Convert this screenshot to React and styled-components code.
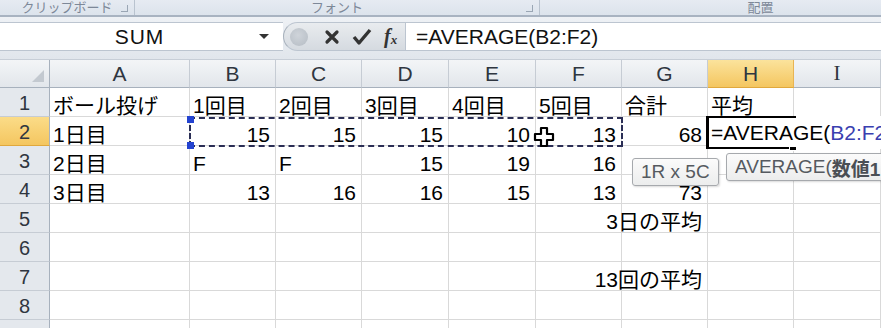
import React from 'react';
import styled, { createGlobalStyle } from 'styled-components';

const COLS = [
  { key: 'A', w: 140 },
  { key: 'B', w: 86 },
  { key: 'C', w: 86 },
  { key: 'D', w: 87 },
  { key: 'E', w: 87 },
  { key: 'F', w: 86 },
  { key: 'G', w: 86 },
  { key: 'H', w: 86 },
  { key: 'I', w: 87 },
];

// each row: [A..I] ; numbers are right aligned
const ROWS = [
  ['ボール投げ', '1回目', '2回目', '3回目', '4回目', '5回目', '合計', '平均', ''],
  ['1日目', 15, 15, 15, 10, 13, 68, '', ''],
  ['2日目', 'F', 'F', 15, 19, 16, '', '', ''],
  ['3日目', 13, 16, 16, 15, 13, 73, '', ''],
  ['', '', '', '', '', '', { text: '3日の平均', right: true }, '', ''],
  ['', '', '', '', '', '', '', '', ''],
  ['', '', '', '', '', '', { text: '13回の平均', right: true }, '', ''],
  ['', '', '', '', '', '', '', '', ''],
];

const GlobalStyle = createGlobalStyle`
  html, body {
    margin: 0;
    padding: 0;
    background: #ffffff;
    overflow: hidden;
  }
  * { box-sizing: border-box; }
`;

const Page = styled.div`
  width: 881px;
  height: 328px;
  overflow: hidden;
  display: flex;
  flex-direction: column;
  font-family: "Liberation Sans", "Noto Sans CJK JP", sans-serif;
  background: #ffffff;

  & > * { flex-shrink: 0; }
`;

const Ribbon = styled.div`
  height: 15px;
  display: grid;
  grid-template-columns: 135px 405px 1fr;
  background: linear-gradient(#e6ebf2, #dce3ec);
  overflow: hidden;
`;

const RibbonGroup = styled.div`
  position: relative;
  border-right: 1px solid #b9c3cf;
  color: #7d8898;
  font-size: 13px;
  line-height: 13px;
  padding-top: 1px;
  text-align: center;
  padding-left: ${(p) => p.$shift || 0}px;
  white-space: nowrap;
  overflow: hidden;

  &:last-child { border-right: none; }
`;

const Launcher = styled.span`
  position: absolute;
  right: 6px;
  top: 5px;
  width: 7px;
  height: 7px;
  border-right: 1px solid #9aa6b4;
  border-bottom: 1px solid #9aa6b4;
`;

const RibbonEdge = styled.div`
  height: 2px;
  background: #a8b3c1;
`;

const FormulaStrip = styled.div`
  height: 43px;
  padding: 5px 0 8px;
  display: flex;
  background: linear-gradient(#eef1f5, #e1e6ec);
  border-bottom: 1px solid #c7ced7;
`;

const NameBox = styled.div`
  width: 283px;
  display: flex;
  align-items: center;
  background: #ffffff;
  border-top: 1px solid #bcc5d0;
  border-bottom: 1px solid #bcc5d0;
  font-size: 21px;
  color: #111;
`;

const NameText = styled.span`
  flex: 1;
  text-align: center;
  padding-left: 20px;
  letter-spacing: 1px;
`;

const DropArrow = styled.span`
  width: 0;
  height: 0;
  margin-right: 14px;
  border-left: 5px solid transparent;
  border-right: 5px solid transparent;
  border-top: 5px solid #333;
`;

const FxPill = styled.div`
  width: 122px;
  display: flex;
  align-items: center;
  gap: 12px;
  padding-left: 6px;
  background: linear-gradient(#e9ecef, #d5dae0);
  border-top: 1px solid #bcc5d0;
  border-bottom: 1px solid #bcc5d0;
  border-left: 1px solid #a9b2bd;
  border-radius: 16px 0 0 16px;
`;

const Knob = styled.span`
  width: 18px;
  height: 18px;
  border-radius: 50%;
  background: radial-gradient(circle at 45% 40%, #cfd4da, #b5bcc4);
  margin-right: 4px;
`;

const FxLabel = styled.span`
  font-family: "Liberation Serif", serif;
  font-style: italic;
  font-weight: bold;
  font-size: 20px;
  color: #333;

  sub {
    font-size: 13px;
    vertical-align: -1px;
  }
`;

const FormulaInput = styled.div`
  flex: 1;
  display: flex;
  align-items: center;
  padding-left: 10px;
  background: #ffffff;
  border: 1px solid #bcc5d0;
  border-right: none;
  font-size: 21px;
  color: #111;
  white-space: nowrap;
`;

const Sheet = styled.div`
  position: relative;
  display: grid;
  grid-template-columns: 50px ${COLS.map((c) => c.w + 'px').join(' ')};
  grid-template-rows: 28px repeat(9, 29px);
  font-size: 21px;
`;

const Corner = styled.div`
  background: linear-gradient(#f3f5f7, #e2e6eb);
  border-right: 1px solid #a7b1bd;
  border-bottom: 1px solid #a7b1bd;
  position: relative;

  &::after {
    content: '';
    position: absolute;
    right: 5px;
    bottom: 5px;
    border-left: 12px solid transparent;
    border-bottom: 12px solid #c3c9d0;
  }
`;

const ColHead = styled.div`
  display: flex;
  align-items: center;
  justify-content: center;
  color: #2f3640;
  font-size: 21px;
  background: ${(p) =>
    p.$active ? 'linear-gradient(#fbe39c, #f4c660)' : 'linear-gradient(#f3f5f7, #e2e6eb)'};
  border-right: 1px solid ${(p) => (p.$active ? '#e8b453' : '#c6ccd4')};
  border-bottom: 1px solid ${(p) => (p.$active ? '#e0a83d' : '#a7b1bd')};
  font-family: ${(p) => (p.$serif ? '"Liberation Serif", serif' : 'inherit')};
`;

const RowHead = styled.div`
  display: flex;
  align-items: center;
  justify-content: center;
  color: #2f3640;
  font-size: 20px;
  padding-top: 2px;
  background: ${(p) => (p.$active ? 'linear-gradient(#fbdc88, #f4c660)' : '#e4e8ed')};
  border-right: 1px solid #a7b1bd;
  border-bottom: 1px solid ${(p) => (p.$active ? '#e0a83d' : '#c6ccd4')};
`;

const Cell = styled.div`
  padding: 7px ${(p) => (p.$right ? '5px' : '0')} 0 ${(p) => (p.$right ? '0' : '3px')};
  line-height: 22px;
  text-align: ${(p) => (p.$right ? 'right' : 'left')};
  border-right: 1px solid #d9d9d9;
  border-bottom: 1px solid #d9d9d9;
  white-space: nowrap;
  color: #000;
  overflow: visible;
  direction: ${(p) => (p.$spill ? 'rtl' : 'ltr')};
`;

const Marquee = styled.div`
  position: absolute;
  left: 189px;
  top: 57px;
  width: 434px;
  height: 30px;
  border: 2px dashed #2a2e55;
  background: transparent;
`;

const Handle = styled.span`
  position: absolute;
  left: -4px;
  width: 7px;
  height: 7px;
  background: #2443d0;
  top: ${(p) => (p.$bottom ? '23px' : '-3px')};
`;

const EditCell = styled.div`
  position: absolute;
  left: 706px;
  top: 56px;
  width: 175px;
  height: 33px;
  background: #ffffff;
  border-left: 3px solid #000;
  padding-left: 2px;
  padding-top: 2px;
  line-height: 30px;
  font-size: 21px;
  white-space: nowrap;
  overflow: hidden;

  &::before,
  &::after {
    content: '';
    position: absolute;
    left: 0;
    width: 87px;
    height: 2px;
    background: #000;
  }
  &::before { top: 0; }
  &::after { bottom: 0; }
`;

const RangeRef = styled.span`
  color: #3a3fb0;
`;

const FillHandle = styled.span`
  position: absolute;
  left: 789px;
  top: 86px;
  width: 8px;
  height: 5px;
  background: #000;
  border: 1px solid #fff;
`;

const Tip = styled.div`
  position: absolute;
  left: ${(p) => p.$x}px;
  top: ${(p) => p.$y}px;
  height: 28px;
  padding: 0 8px;
  display: flex;
  align-items: center;
  background: linear-gradient(#fbfbfb, #eceded);
  border: 1px solid #a6a9ad;
  border-radius: 3px;
  box-shadow: 1px 1px 2px rgba(0, 0, 0, 0.15);
  color: #555a60;
  font-size: 19px;
  white-space: nowrap;

  b { font-weight: bold; color: #4a4f55; }
`;

const Cursor = styled.svg`
  position: absolute;
  left: 533px;
  top: 66px;
`;

function MoveCursor() {
  return (
    <Cursor width="22" height="22" viewBox="0 0 22 22">
      <path
        d="M8 2h6v6h6v6h-6v6H8v-6H2V8h6z"
        fill="#fff"
        stroke="#000"
        strokeWidth="2.2"
        strokeLinejoin="round"
      />
    </Cursor>
  );
}

function CancelIcon() {
  return (
    <svg width="16" height="16" viewBox="0 0 16 16">
      <path d="M3 3l10 10M13 3L3 13" stroke="#333" strokeWidth="3.2" strokeLinecap="round" />
    </svg>
  );
}

function EnterIcon() {
  return (
    <svg width="20" height="18" viewBox="0 0 20 18">
      <path d="M2 9l5 6L18 2" fill="none" stroke="#333" strokeWidth="3.4" strokeLinejoin="round" />
    </svg>
  );
}

export default function App() {
  return (
    <Page>
      <GlobalStyle />
      <Ribbon>
        <RibbonGroup>
          クリップボード
          <Launcher />
        </RibbonGroup>
        <RibbonGroup>
          フォント
          <Launcher />
        </RibbonGroup>
        <RibbonGroup $shift={100}>配置</RibbonGroup>
      </Ribbon>
      <RibbonEdge />
      <FormulaStrip>
        <NameBox>
          <NameText>SUM</NameText>
          <DropArrow />
        </NameBox>
        <FxPill>
          <Knob />
          <CancelIcon />
          <EnterIcon />
          <FxLabel>
            f<sub>x</sub>
          </FxLabel>
        </FxPill>
        <FormulaInput>=AVERAGE(B2:F2)</FormulaInput>
      </FormulaStrip>
      <Sheet>
        <Corner />
        {COLS.map((c) => (
          <ColHead key={c.key} $active={c.key === 'H'} $serif={c.key === 'I'}>
            {c.key}
          </ColHead>
        ))}
        {ROWS.map((row, r) => (
          <React.Fragment key={r}>
            <RowHead $active={r === 1}>{r + 1}</RowHead>
            {row.map((v, c) => {
              const isObj = v && typeof v === 'object';
              const right = typeof v === 'number' || (isObj && v.right);
              return (
                <Cell key={c} $right={right} $spill={isObj}>
                  {isObj ? v.text : v}
                </Cell>
              );
            })}
          </React.Fragment>
        ))}
        {/* row 9: only its top edge is in view */}
        <RowHead />
        {COLS.map((c) => (
          <Cell key={c.key} />
        ))}
        <Marquee>
          <Handle />
          <Handle $bottom />
        </Marquee>
        <MoveCursor />
        <EditCell>
          =AVERAGE(<RangeRef>B2:F2</RangeRef>
        </EditCell>
        <FillHandle />
        <Tip $x={632} $y={98}>1R x 5C</Tip>
        <Tip $x={726} $y={93}>
          AVERAGE(<b>数値1</b>, [数値2], ...)
        </Tip>
      </Sheet>
    </Page>
  );
}
